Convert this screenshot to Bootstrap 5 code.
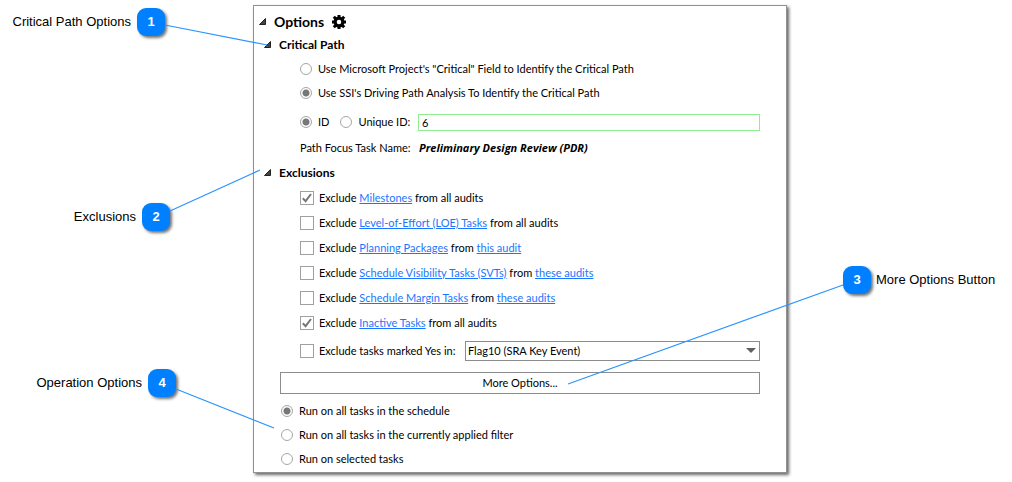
<!DOCTYPE html>
<html lang="en">
<head>
<meta charset="utf-8">
<meta name="viewport" content="width=device-width, initial-scale=1">
<title>Audit Options</title>
<link href="https://cdn.jsdelivr.net/npm/bootstrap@5.3.0/dist/css/bootstrap.min.css" rel="stylesheet">
<style>
  body { background: #fff; color: #000; font: 11px/16px Lato, "Open Sans", sans-serif; }
  a { color: #1a75ff; }
  .guide { display: grid; grid-template-columns: 253fr 534fr 225fr; padding: 5px 0 9px; }
  .side { font: 13px/28px "Liberation Sans", Arial, sans-serif; }
  .side-left { padding-top: 3px; }
  .side-right { padding-top: 261px; }
  .callout { gap: 6px; height: 28px; white-space: nowrap; }
  .callout-1 { padding-right: 88px; margin-bottom: 167px; }
  .callout-2 { padding-right: 83px; margin-bottom: 138px; }
  .callout-4 { padding-right: 77px; }
  .callout-3 { padding-left: 56px; gap: 5px; }
  .num { width: 28px; height: 28px; border-radius: 9px; background: #0080ff; color: #fff;
    font-weight: 700; text-align: center; box-shadow: 2px 2px 3px rgba(0,0,0,.55); flex: none; }
  .leaders { position: absolute; inset: 0; width: 100%; height: 100%; pointer-events: none; }
  .leaders line { stroke: #2b93ff; stroke-width: 1.2; vector-effect: non-scaling-stroke; }
  .panel { border: 1px solid #919191; background: #fff; box-shadow: 2px 2px 3px rgba(0,0,0,.6); padding: 4px 26px 1px 5px; }
  .toggle { border: 0; background: none; padding: 0; display: flex; align-items: center; gap: 8px; color: #000; font-weight: 700; }
  .title-row { font-size: 14px; height: 24px; }
  .group-row { font-size: 12px; height: 22px; padding-left: 5px; }
  .group-exclusions { margin: 2px 0 1px; }
  .opt { height: 24px; gap: 6px; }
  .indent { padding: 1px 0 0 41px; }
  .id-row { padding: 5px 0 2px; }
  .excl .opt { height: 25px; gap: 5px; padding-left: 41px; }
  .excl .opt-flag { margin-top: 3px; }
  .more-row { padding: 9px 0 0 21px; }
  .run { padding: 5px 0 0 22px; }
  .opt .form-check-input { margin: 0; border: 1px solid #a6a6a6; box-shadow: none; flex: none; background-color: #fff; }
  .opt .form-check-input[type=radio] { width: 12px; height: 12px; }
  .opt .form-check-input[type=radio]:checked { background-size: 10px 10px; background-image: radial-gradient(circle, #777 0 3px, transparent 4px); }
  .opt .form-check-input[type=checkbox] { width: 14px; height: 14px; border-color: #a0a0a0; border-radius: 0; }
  .opt .form-check-input[type=checkbox]:checked { background-size: 12px 12px;
    background-image: url("data:image/svg+xml,%3Csvg xmlns='http://www.w3.org/2000/svg' viewBox='0 0 12 12'%3E%3Cpath d='M1.8 6.3 4.6 9.2 10 2' fill='none' stroke='%23777' stroke-width='2'/%3E%3C/svg%3E"); }
  .id-input, .flag, .more { transition: none; }
  .id-input { height: 17px; min-height: 0; padding: 0 3px; border: 1px solid #90ee90; border-radius: 0; font-size: 11px; line-height: 15px; color: #000; }
  .id-choice { width: 118px; flex: none; }
  .id-choice .opt:first-child { margin-right: 11px; }
  .focus-name { width: 119px; flex: none; }
  .focus-value { font-family: "Open Sans", sans-serif; font-style: italic; }
  .flag-label { width: 141px; flex: none; }
  .flag { height: 20px; padding: 0 20px 0 2px; border: 1px solid #8c8c8c; border-radius: 0; font-size: 11px; line-height: 18px; color: #000;
    background-image: url("data:image/svg+xml,%3Csvg xmlns='http://www.w3.org/2000/svg' viewBox='0 0 10 6'%3E%3Cpath d='M0 0h10L5 5z' fill='%23606060'/%3E%3C/svg%3E");
    background-size: 10px 6px; background-position: right 3px center; }
  .more { height: 22px; padding: 0; border: 1px solid #8c8c8c; border-radius: 0; font-size: 11px; line-height: 20px; color: #000; background: #fff; }
</style>
</head>
<body>
<main class="guide position-relative">
  <aside class="side side-left">
    <div class="callout callout-1 d-flex justify-content-end"><span>Critical Path Options</span><span class="num">1</span></div>
    <div class="callout callout-2 d-flex justify-content-end"><span>Exclusions</span><span class="num">2</span></div>
    <div class="callout callout-4 d-flex justify-content-end"><span>Operation Options</span><span class="num">4</span></div>
  </aside>

  <form class="panel">
    <h1 class="title-row d-flex align-items-center m-0">
      <button type="button" class="toggle">
        <svg width="7" height="7" viewBox="0 0 7 7"><path d="M6.5.5v6h-6z" fill="#444" stroke="#222"/></svg>
        Options
        <svg width="14" height="14" viewBox="-7 -7 14 14"><circle r="3.900" fill="none" stroke="#000" stroke-width="3.200"/><path d="M0-7v2.500M0 7V4.500M-7 0h2.500M7 0H4.500M-5.200-5.200l2 2M5.200 5.200l-2-2M-5.200 5.200l2-2M5.200-5.200l-2 2" stroke="#000" stroke-width="3"/></svg>
      </button>
    </h1>
    <h2 class="group-row d-flex align-items-center m-0">
      <button type="button" class="toggle"><svg width="7" height="7" viewBox="0 0 7 7"><path d="M6.5.5v6h-6z" fill="#444" stroke="#222"/></svg>Critical Path</button>
    </h2>
    <div class="indent">
      <div class="opt d-flex align-items-center"><input class="form-check-input" type="radio" name="method" id="m1"><label for="m1">Use Microsoft Project's "Critical" Field to Identify the Critical Path</label></div>
      <div class="opt d-flex align-items-center"><input class="form-check-input" type="radio" name="method" id="m2" checked><label for="m2">Use SSI's Driving Path Analysis To Identify the Critical Path</label></div>
      <div class="id-row d-flex align-items-center">
        <div class="id-choice d-flex">
          <div class="opt d-flex align-items-center"><input class="form-check-input" type="radio" name="idtype" id="i1" checked><label for="i1">ID</label></div>
          <div class="opt d-flex align-items-center"><input class="form-check-input" type="radio" name="idtype" id="i2"><label for="i2">Unique ID:</label></div>
        </div>
        <input class="id-input form-control" type="text" value="6" aria-label="Task ID">
      </div>
      <div class="opt d-flex align-items-center gap-0"><span class="focus-name">Path Focus Task Name:</span><strong class="focus-value">Preliminary Design Review (PDR)</strong></div>
    </div>
    <h2 class="group-row group-exclusions d-flex align-items-center">
      <button type="button" class="toggle"><svg width="7" height="7" viewBox="0 0 7 7"><path d="M6.5.5v6h-6z" fill="#444" stroke="#222"/></svg>Exclusions</button>
    </h2>
    <div class="excl">
      <div class="opt d-flex align-items-center"><input class="form-check-input" type="checkbox" id="e1" checked><label for="e1">Exclude <a href="#">Milestones</a> from all audits</label></div>
      <div class="opt d-flex align-items-center"><input class="form-check-input" type="checkbox" id="e2"><label for="e2">Exclude <a href="#">Level-of-Effort (LOE) Tasks</a> from all audits</label></div>
      <div class="opt d-flex align-items-center"><input class="form-check-input" type="checkbox" id="e3"><label for="e3">Exclude <a href="#">Planning Packages</a> from <a href="#">this audit</a></label></div>
      <div class="opt d-flex align-items-center"><input class="form-check-input" type="checkbox" id="e4"><label for="e4">Exclude <a href="#">Schedule Visibility Tasks (SVTs)</a> from <a href="#">these audits</a></label></div>
      <div class="opt d-flex align-items-center"><input class="form-check-input" type="checkbox" id="e5"><label for="e5">Exclude <a href="#">Schedule Margin Tasks</a> from <a href="#">these audits</a></label></div>
      <div class="opt d-flex align-items-center"><input class="form-check-input" type="checkbox" id="e6" checked><label for="e6">Exclude <a href="#">Inactive Tasks</a> from all audits</label></div>
      <div class="opt opt-flag d-flex align-items-center"><input class="form-check-input" type="checkbox" id="e7"><label class="flag-label" for="e7">Exclude tasks marked Yes in:</label>
        <select class="flag form-select" aria-label="Flag field"><option>Flag10 (SRA Key Event)</option></select></div>
    </div>
    <div class="more-row"><button type="button" class="more btn d-block w-100">More Options...</button></div>
    <div class="run">
      <div class="opt d-flex align-items-center"><input class="form-check-input" type="radio" name="run" id="r1" checked><label for="r1">Run on all tasks in the schedule</label></div>
      <div class="opt d-flex align-items-center"><input class="form-check-input" type="radio" name="run" id="r2"><label for="r2">Run on all tasks in the currently applied filter</label></div>
      <div class="opt d-flex align-items-center"><input class="form-check-input" type="radio" name="run" id="r3"><label for="r3">Run on selected tasks</label></div>
    </div>
  </form>

  <aside class="side side-right">
    <div class="callout callout-3 d-flex"><span class="num">3</span><span>More Options Button</span></div>
  </aside>

  <svg class="leaders" viewBox="0 0 1012 482" preserveAspectRatio="none" aria-hidden="true">
    <line x1="165" y1="25" x2="267" y2="45"/>
    <line x1="170" y1="211" x2="260" y2="170"/>
    <line x1="568" y1="384" x2="843" y2="285"/>
    <line x1="176" y1="389" x2="274" y2="428"/>
  </svg>
</main>
<script src="https://cdn.jsdelivr.net/npm/bootstrap@5.3.0/dist/js/bootstrap.bundle.min.js"></script>
</body>
</html>
